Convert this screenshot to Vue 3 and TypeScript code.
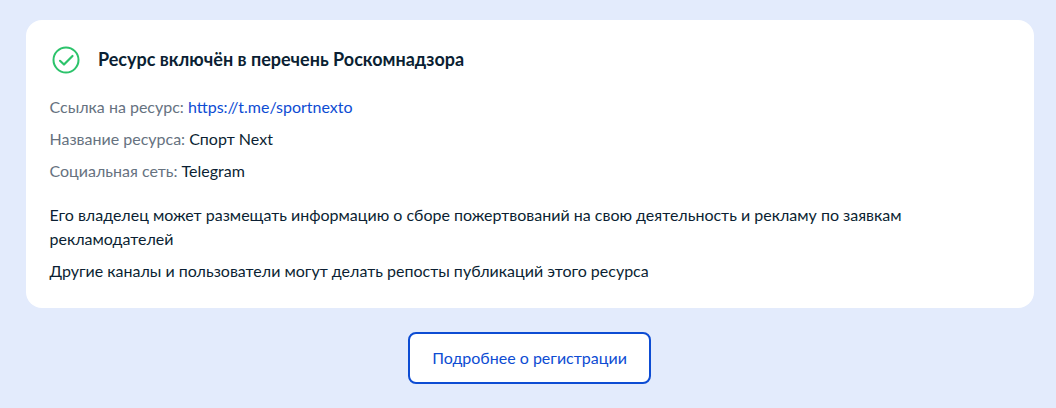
<script setup lang="ts">
const facts = [
  { label: 'Название ресурса:', value: 'Спорт Next' },
  { label: 'Социальная сеть:', value: 'Telegram' },
]
</script>

<template>
  <div class="page">
    <section class="card">
      <header class="head">
        <svg class="ok" width="28" height="28" viewBox="0 0 28 28" fill="none" aria-hidden="true">
          <circle cx="14" cy="14" r="12.5" stroke="#2cc36b" stroke-width="2" />
          <path d="M8 14.8l4 3.7 8.5-8.5" stroke="#2cc36b" stroke-width="2.2" stroke-linecap="round" stroke-linejoin="round" />
        </svg>
        <h2>Ресурс включён в перечень Роскомнадзора</h2>
      </header>

      <div class="facts">
        <p><span class="label">Ссылка на ресурс:</span> <a href="#">https://t.me/sportnexto</a></p>
        <p v-for="f in facts" :key="f.label"><span class="label">{{ f.label }}</span> {{ f.value }}</p>
      </div>

      <div class="notes">
        <p>Его владелец может размещать информацию о сборе пожертвований на свою деятельность и рекламу по заявкам рекламодателей</p>
        <p>Другие каналы и пользователи могут делать репосты публикаций этого ресурса</p>
      </div>
    </section>

    <button class="more" type="button">Подробнее о регистрации</button>
  </div>
</template>

<style scoped>
.page {
  height: 408px;
  box-sizing: border-box;
  padding: 20px 22px 0 26px;
  background: #e3ebfc;
  display: flex;
  flex-direction: column;
  align-items: center;
  font-family: Lato, "Noto Sans", sans-serif;
  font-size: 16px;
  line-height: 24px;
  color: #0b1f33;
}
.card {
  align-self: stretch;
  box-sizing: border-box;
  height: 288px;
  padding: 24px 23.5px;
  background: #fff;
  border-radius: 16px;
}
.head {
  display: flex;
  align-items: center;
  gap: 18px;
  height: 30px;
}
.ok { flex: none; margin: 1px 0 0 2.5px; }
h2 { margin: 0; font-size: 18px; font-weight: 700; line-height: 24px; }
.facts { margin-top: 21px; display: flex; flex-direction: column; gap: 8px; }
.notes { margin-top: 20px; display: flex; flex-direction: column; gap: 8px; }
p { margin: 0; }
.label { color: #66727f; }
a { color: #0d4cd3; text-decoration: none; }
.more {
  margin-top: 24px;
  margin-right: 1px;
  width: 243px;
  height: 52px;
  box-sizing: border-box;
  border: 2px solid #0d4cd3;
  border-radius: 8px;
  background: #fff;
  color: #0d4cd3;
  font: inherit;
  padding: 0;
}
</style>

<style>
body { margin: 0; }
</style>
